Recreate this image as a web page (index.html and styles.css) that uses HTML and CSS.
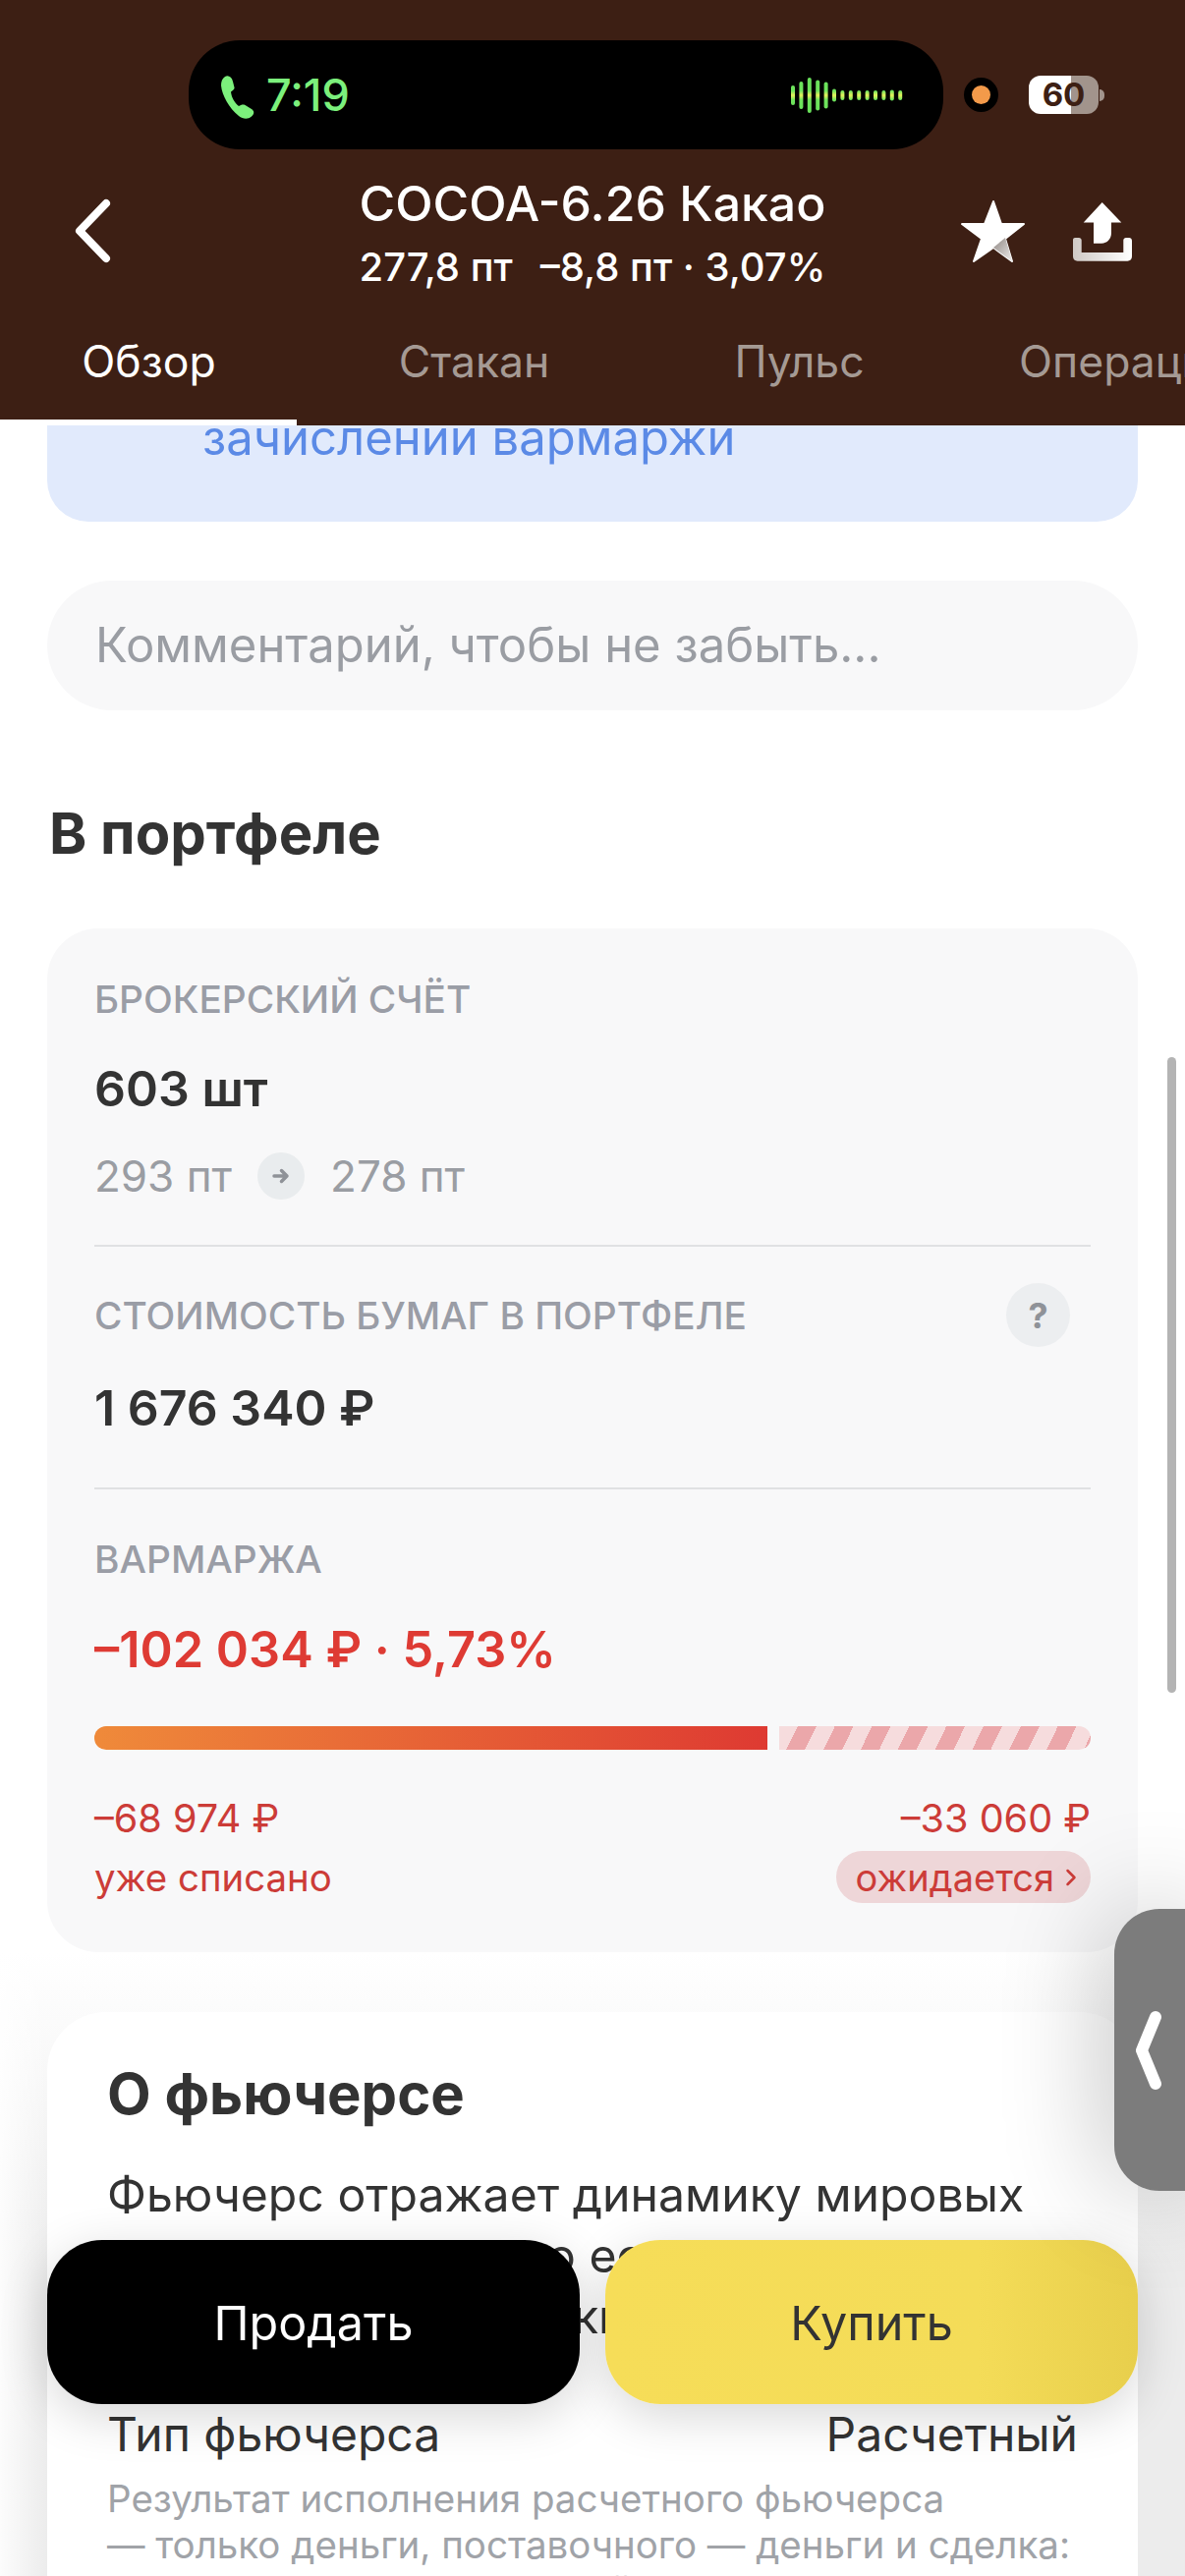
FILE: index.html
```html
<!DOCTYPE html>
<html lang="ru">
<head>
<meta charset="utf-8">
<title>COCOA-6.26 Какао</title>
<link rel="stylesheet" href="styles.css">
</head>
<body>
<div class="screen">
  <header class="top">
    <div class="status">
      <div class="island">
        <svg class="phone" viewBox="0 0 34 44" width="34" height="44"><path d="M4 1C7-1 11 1 12 6L13.500 12C14 14 12 15 10 16.500C10.500 22 14 28 18 31C20 30 22 29 24.500 30L31 34C34 36 34 39 31 41.500C27 45 22 44 18 41C8 33 1 20 0 10C0 6 1 3 4 1Z"/></svg>
        <span class="call-time">7:19</span>
        <svg class="wave" viewBox="0 0 118 38" width="118" height="38">
          <defs><linearGradient id="waveFill" gradientUnits="userSpaceOnUse" x1="0" y1="0" x2="0" y2="38"><stop offset="0" stop-color="#67e05a"/><stop offset=".38" stop-color="#6fe45c"/><stop offset=".5" stop-color="#e6f25c"/><stop offset=".62" stop-color="#6fe45c"/><stop offset="1" stop-color="#67e05a"/></linearGradient></defs>
          <g fill="url(#waveFill)">
            <rect x="0" y="9" width="4" height="20" rx="2"/><rect x="8.400" y="5" width="4" height="28" rx="2"/><rect x="16.800" y="1" width="4" height="36" rx="2"/><rect x="25.200" y="3.500" width="4" height="31" rx="2"/><rect x="33.600" y="5.500" width="4" height="27" rx="2"/><rect x="42" y="12.500" width="4" height="13" rx="2"/><rect x="50.400" y="14" width="4" height="10" rx="2"/><rect x="58.800" y="14" width="4" height="10" rx="2"/><rect x="67.200" y="14" width="4" height="10" rx="2"/><rect x="75.600" y="14" width="4" height="10" rx="2"/><rect x="84" y="14" width="4" height="10" rx="2"/><rect x="92.400" y="14" width="4" height="10" rx="2"/><rect x="100.800" y="13.500" width="4" height="11" rx="2"/><rect x="109.200" y="14" width="4" height="10" rx="2"/>
          </g>
        </svg>
      </div>
      <div class="mic-dot"><i></i></div>
      <div class="battery">60</div>
      <div class="battery-nub"></div>
    </div>

    <div class="titlebar">
      <svg class="back" viewBox="0 0 42 66" width="42" height="66"><path d="M34 5L7 33L34 61"/></svg>
      <div class="title-block">
        <div class="title">COCOA-6.26 Какао</div>
        <div class="quote"><span>277,8 пт</span><span>–8,8 пт · 3,07%</span></div>
      </div>
      <div class="actions">
        <svg class="star" viewBox="0 0 68 64" width="68" height="64">
          <defs><linearGradient id="starLeg" x1="0" y1="0" x2="1" y2="1"><stop offset="0" stop-color="#8f8783"/><stop offset="1" stop-color="#f2f0ef"/></linearGradient></defs>
          <path fill="#fff" stroke="#fff" stroke-width="2" stroke-linejoin="round" d="M34 2L42 25H65L46 40L53 63L34 49L14 63L22 40L2 25H25Z"/>
          <path fill="url(#starLeg)" d="M34 49L46 39L53.500 63.500Z"/>
        </svg>
        <svg class="share" viewBox="0 0 64 62" width="64" height="62">
          <defs><linearGradient id="trayFill" x1="0" y1="0" x2="1" y2="0"><stop offset="0" stop-color="#cfc9c5"/><stop offset="1" stop-color="#fff"/></linearGradient></defs>
          <path fill="url(#trayFill)" d="M4 38H8C9.500 38 10.700 39.200 10.700 40.500V53H53.300V40.500C53.300 39.200 54.500 38 56 38H59C60.700 38 62 39.300 62 41V57C62 59.800 60 61.700 57.500 61.700H6.500C4 61.700 2 59.800 2 57V40C2 38.800 3 38 4 38Z"/>
          <path fill="#fff" d="M31.700 2L51.300 22.500H41V33C41 39 37 43.700 31 43.700H23V22.500H12.700Z"/>
        </svg>
      </div>
    </div>

    <nav class="tabs">
      <span class="tab is-active">Обзор</span>
      <span class="tab">Стакан</span>
      <span class="tab">Пульс</span>
      <span class="tab">Операции</span>
    </nav>
    <div class="tab-line"></div>
  </header>

  <main class="content">
    <div class="notice"><p>зачислении вармаржи</p></div>
    <div class="comment">Комментарий, чтобы не забыть...</div>

    <h2 class="section-title">В портфеле</h2>
    <section class="portfolio">
      <div class="block block-account">
        <div class="caption">БРОКЕРСКИЙ СЧЁТ</div>
        <div class="value">603 шт</div>
        <div class="prices">
          <span>293 пт</span>
          <span class="arrow-dot"><svg viewBox="0 0 20 20" width="20" height="20"><path d="M3 10H16M10.500 4.500L16 10L10.500 15.500"/></svg></span>
          <span>278 пт</span>
        </div>
      </div>
      <div class="block block-cost">
        <div class="caption-row">
          <div class="caption">СТОИМОСТЬ БУМАГ В ПОРТФЕЛЕ</div>
          <span class="help">?</span>
        </div>
        <div class="value">1 676 340 ₽</div>
      </div>
      <div class="block block-margin">
        <div class="caption">ВАРМАРЖА</div>
        <div class="value value-red">–102 034 ₽ · 5,73%</div>
        <div class="margin-bar">
          <div class="bar-paid"></div>
          <div class="bar-wait"></div>
        </div>
        <div class="split">
          <div class="split-col">
            <span class="amount">–68 974 ₽</span>
            <span>уже списано</span>
          </div>
          <div class="split-col split-end">
            <span class="amount">–33 060 ₽</span>
            <span class="pill">ожидается<svg viewBox="0 0 12 20" width="12" height="20"><path d="M2.500 3L9.500 10L2.500 17"/></svg></span>
          </div>
        </div>
      </div>
    </section>

    <div class="about-wrap">
      <section class="about">
        <h2 class="about-title">О фьючерсе</h2>
        <p class="about-text">Фьючерс отражает динамику мировых</p>
        <p class="about-text frag-one">о ес</p>
        <p class="about-text frag-two">ки</p>
        <div class="spec">
          <span>Тип фьючерса</span>
          <span>Расчетный</span>
        </div>
        <p class="spec-note">Результат исполнения расчетного фьючерса<br>— только деньги, поставочного — деньги и сделка:</p>
        <p class="spec-note frag-three">й</p>
      </section>
    </div>
  </main>

  <div class="trade">
    <button class="btn btn-sell">Продать</button>
    <button class="btn btn-buy">Купить</button>
  </div>

  <div class="scrollbar"></div>
  <div class="side-handle">
    <svg viewBox="0 0 30 84" width="30" height="84"><path d="M24 8L10 42L24 76"/></svg>
  </div>
</div>
</body>
</html>
```

FILE: styles.css
```css
* { box-sizing: border-box; }
html, body { margin: 0; padding: 0; background: #fff; }
body { font-family: Inter, "Noto Sans", sans-serif; color: #333; }
p, h2 { margin: 0; }

.screen { position: relative; width: 1206px; height: 2622px; overflow: hidden; background: #fff; }

/* header */
.top { position: relative; z-index: 2; height: 433px; background: #3d1f14; color: #fff; overflow: hidden; }
.status { display: flex; align-items: center; padding: 41px 0 0 192px; height: 152px; }
.island { display: flex; align-items: center; width: 768px; height: 111px; padding: 0 37px 0 33px; border-radius: 52px; background: #000; }
.phone { fill: #7cf07c; flex: none; margin-top: 5px; }
.call-time { margin-left: 12px; font-size: 45px; font-weight: 500; line-height: 1; color: #7cf07c; }
.wave { margin-left: auto; }
.mic-dot { display: flex; align-items: center; justify-content: center; width: 35px; height: 35px; margin-left: 21px; border-radius: 50%; background: #000; }
.mic-dot i { width: 19px; height: 19px; border-radius: 50%; background: #f39a4a; }
.battery { width: 71px; height: 39px; margin-left: 31px; border-radius: 12px; background: linear-gradient(to right, #fff 61%, #a2948c 61%); color: #3d1f14; font-size: 33px; font-weight: 700; line-height: 39px; text-align: center; }
.battery-nub { width: 5px; height: 12px; margin-left: 1px; border-radius: 0 6px 6px 0; background: #a2948c; }

.titlebar { display: grid; grid-template-columns: 1fr auto 1fr; align-items: center; height: 166px; }
.back { margin-left: 74px; fill: none; stroke: #fff; stroke-width: 8px; stroke-linecap: round; stroke-linejoin: round; }
.title-block { text-align: center; }
.title { font-size: 50px; font-weight: 500; line-height: 62px; }
.quote { display: flex; justify-content: center; gap: 28px; margin-top: 11px; font-size: 40px; font-weight: 500; line-height: 46px; }
.actions { display: flex; align-items: center; justify-content: flex-end; gap: 45px; padding-right: 52px; }

.tabs { display: grid; grid-auto-flow: column; grid-auto-columns: 331px; margin-left: -14px; margin-top: 24px; font-size: 44.500px; line-height: 52px; }
.tab { color: #a59a94; text-align: center; white-space: nowrap; }
.tab.is-active { color: #fff; }
.tab:last-child { text-align: left; padding-left: 58px; }
.tab-line { position: absolute; left: 0; bottom: 0; width: 302px; height: 6px; background: #fff; }

/* scrolling content */
.content { display: flex; flex-direction: column; }
.notice { height: 98px; margin: 0 48px; padding-left: 158px; border-radius: 0 0 42px 42px; background: #e1eafc; overflow: hidden; }
.notice p { margin-top: -14px; font-size: 49px; line-height: 54px; color: #5b8ae6; }
.comment { height: 132px; margin: 60px 48px 0; padding-left: 49px; border-radius: 66px; background: #f8f8f9; color: #9a9da3; font-size: 49px; line-height: 132px; }
.section-title { margin: 92px 50px 0; font-size: 58px; font-weight: 700; line-height: 66px; }

.portfolio { margin: 64px 48px 0; height: 1042px; padding: 0 48px; border-radius: 52px; background: #f8f8f9; }
.block { border-bottom: 2px solid #e0e1e3; }
.block:last-child { border-bottom: 0; }
.block-account { height: 324px; padding-top: 50px; }
.block-cost { height: 247px; padding-top: 37px; }
.block-margin { padding-top: 49px; }
.caption { font-size: 38.800px; font-weight: 500; line-height: 44px; color: #9a9da6; }
.value { margin-top: 40px; font-size: 50px; font-weight: 600; line-height: 58px; color: #333; }
.prices { display: flex; align-items: center; gap: 26px; margin-top: 33px; font-size: 44px; line-height: 54px; color: #9a9da3; }
.arrow-dot { display: flex; align-items: center; justify-content: center; width: 48px; height: 48px; border-radius: 50%; background: #e9ecee; }
.arrow-dot path { fill: none; stroke: #8f9298; stroke-width: 3.5px; stroke-linecap: round; stroke-linejoin: round; }
.caption-row { display: flex; align-items: center; justify-content: space-between; padding-right: 21px; }
.help { display: flex; align-items: center; justify-content: center; width: 65px; height: 65px; border-radius: 50%; background: #eceef0; color: #8f9298; font-size: 36px; font-weight: 700; }
.block-cost .value { margin-top: 33px; }
.value-red { color: #de3b34; font-size: 50.400px; margin-top: 41px; }

.margin-bar { display: flex; gap: 12px; height: 24px; margin-top: 49px; }
.bar-paid { width: 685px; border-radius: 14px 0 0 14px; background: linear-gradient(to right, #ef8a3a, #de3a32); }
.bar-wait { flex: 1; border-radius: 0 14px 14px 0; background: repeating-linear-gradient(116deg, #f6dcdd 0 17px, #eba7aa 17px 34px); }

.split { display: flex; justify-content: space-between; margin-top: 46px; font-size: 38.400px; line-height: 48px; color: #cc3c38; }
.amount { font-size: 39.600px; }
.split-col { display: flex; flex-direction: column; gap: 12px; }
.split-end { align-items: flex-end; gap: 9px; }
.pill { display: flex; align-items: center; gap: 11px; height: 53px; padding: 0 14px 0 20px; border-radius: 27px; background: #eed6d8; font-size: 38px; }
.pill path { fill: none; stroke: #cc3c38; stroke-width: 2.5px; stroke-linecap: round; stroke-linejoin: round; }

.about-wrap { flex: 1; padding: 61px 48px 0; background: linear-gradient(to right, rgba(255,255,255,.85), rgba(255,255,255,0) 48px), linear-gradient(to bottom, #fff, #f7f7f7 140px, #ececec 320px); }
.about { height: 700px; padding: 50px 61px 0; border-radius: 60px; background: #fff; }
.about-title { font-size: 58px; font-weight: 700; line-height: 66px; }
.about-text { margin-top: 39px; font-size: 48.200px; line-height: 62px; }
.frag-one, .frag-two { margin-top: 0; padding-left: 448px; white-space: nowrap; overflow: hidden; }
.frag-two { padding-left: 474px; }
.spec { display: flex; justify-content: space-between; margin-top: 58px; font-size: 48px; line-height: 62px; }
.spec-note { margin-top: 11px; font-size: 38.500px; line-height: 47px; color: #a0a3a8; }
.frag-three { margin-top: 0; padding-left: 512px; }

/* overlays */
.trade { position: absolute; z-index: 3; left: 48px; right: 48px; top: 2280px; display: flex; gap: 26px; }
.btn { flex: 1; height: 167px; padding-top: 2px; border: 0; border-radius: 56px; font-family: inherit; font-size: 48.500px; box-shadow: 0 12px 50px rgba(0,0,0,.16); }
.btn-sell { background: #000; color: #fff; }
.btn-buy { background: linear-gradient(to right, #f6dd58, #f4dc58 70%, #e8cf4c); color: #333; }

.scrollbar { position: absolute; left: 1188px; top: 1076px; width: 9px; height: 647px; border-radius: 5px; background: #b4b4b4; }
.side-handle { position: absolute; z-index: 4; right: 0; top: 1943px; display: flex; align-items: center; width: 72px; height: 287px; padding-left: 18px; border-radius: 46px 0 0 46px; background: #7c7c7c; box-shadow: 0 0 110px rgba(0,0,0,.3); }
.side-handle path { fill: none; stroke: #fff; stroke-width: 12px; stroke-linecap: round; stroke-linejoin: round; }
```
